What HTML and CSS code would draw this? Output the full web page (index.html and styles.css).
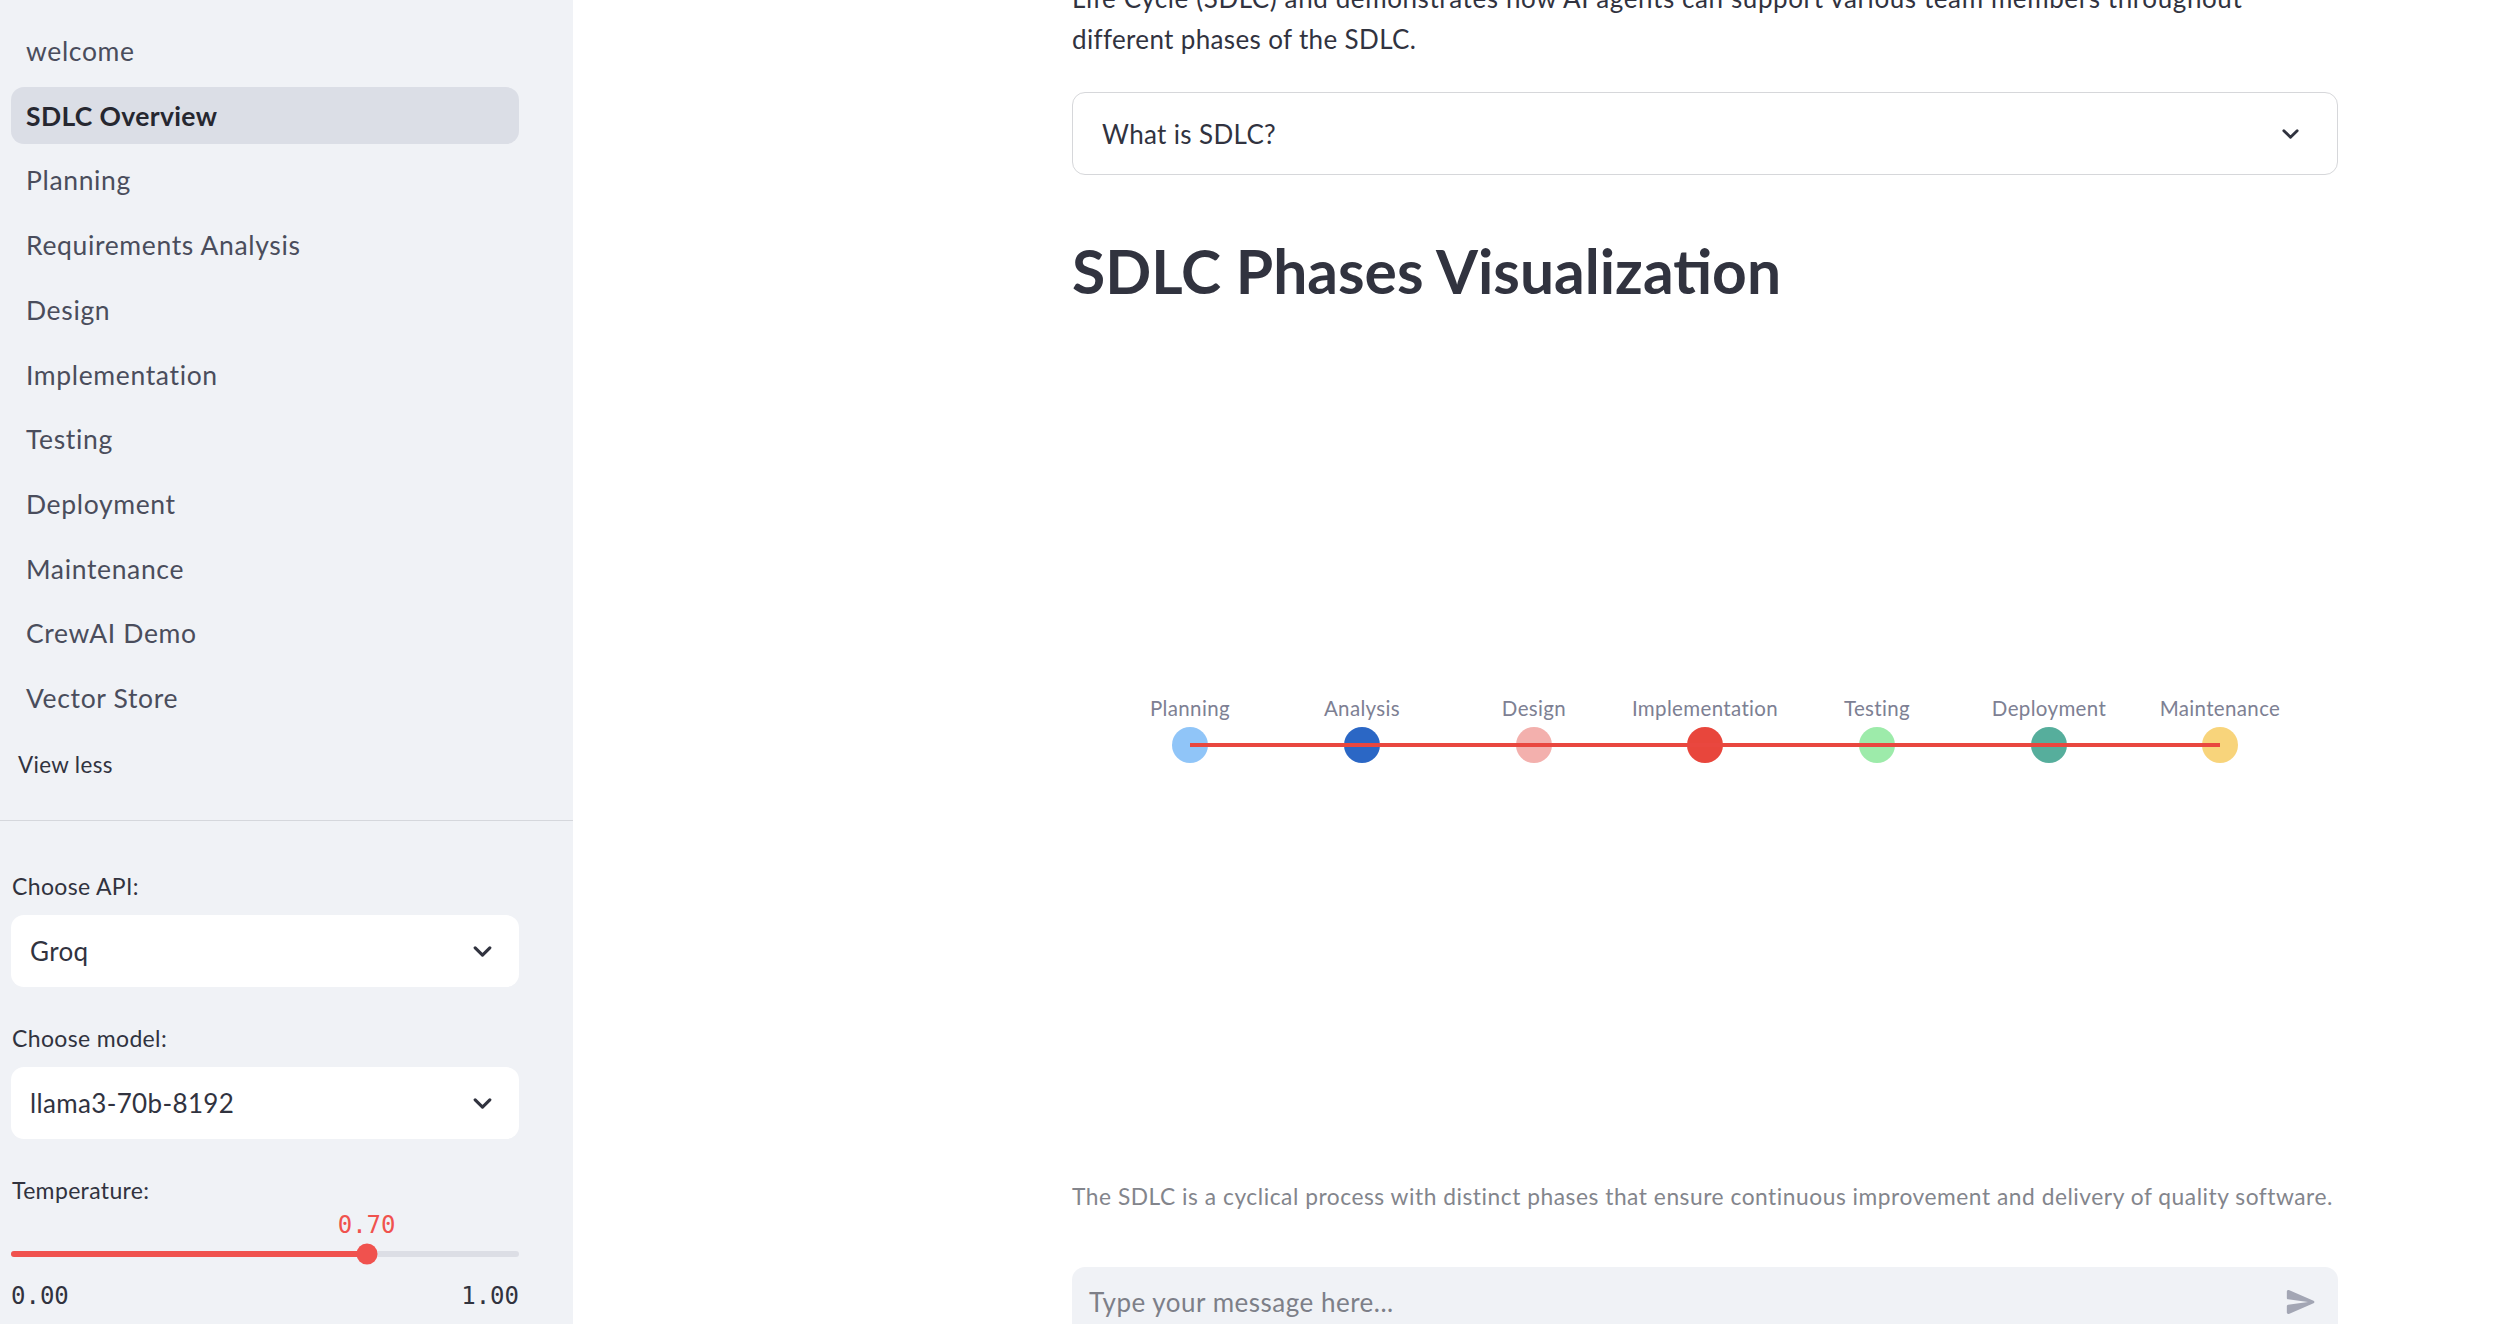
FILE: index.html
```html
<!DOCTYPE html>
<html lang="en">
<head>
<meta charset="utf-8">
<title>SDLC Overview</title>
<link rel="stylesheet" href="styles.css">
</head>
<body>
<div class="app">
  <aside class="sidebar">
    <nav class="nav">
      <ul class="nav-list">
        <li><a class="nav-link">welcome</a></li>
        <li><a class="nav-link active">SDLC Overview</a></li>
        <li><a class="nav-link">Planning</a></li>
        <li><a class="nav-link">Requirements Analysis</a></li>
        <li><a class="nav-link">Design</a></li>
        <li><a class="nav-link">Implementation</a></li>
        <li><a class="nav-link">Testing</a></li>
        <li><a class="nav-link">Deployment</a></li>
        <li><a class="nav-link">Maintenance</a></li>
        <li><a class="nav-link">CrewAI Demo</a></li>
        <li><a class="nav-link">Vector Store</a></li>
      </ul>
      <div class="view-less">View less</div>
    </nav>
    <div class="sidebar-body">
      <div class="widget">
        <div class="widget-label">Choose API:</div>
        <div class="select">
          <span>Groq</span>
          <svg class="chev" viewBox="0 0 20 12" width="19" height="11"><polyline points="2,2 10,10 18,2"/></svg>
        </div>
      </div>
      <div class="widget">
        <div class="widget-label">Choose model:</div>
        <div class="select">
          <span>llama3-70b-8192</span>
          <svg class="chev" viewBox="0 0 20 12" width="19" height="11"><polyline points="2,2 10,10 18,2"/></svg>
        </div>
      </div>
      <div class="widget">
        <div class="widget-label">Temperature:</div>
        <div class="slider">
          <div class="slider-value-row"><span class="slider-value" style="left:70%">0.70</span></div>
          <div class="track-row">
            <div class="track"><div class="fill" style="width:70%"></div><div class="thumb" style="left:70%"></div></div>
          </div>
          <div class="ticks"><span>0.00</span><span>1.00</span></div>
        </div>
      </div>
    </div>
  </aside>
  <main class="main">
    <div class="block">
      <p class="intro"><span class="intro-first">Life Cycle (SDLC) and demonstrates how AI agents can support various team members throughout</span><br>different phases of the SDLC.</p>
      <div class="expander">
        <span>What is SDLC?</span>
        <svg class="exp-chev" viewBox="0 0 20 12" width="17" height="10"><polyline points="2,2 10,10 18,2"/></svg>
      </div>
      <h1 class="title">SDLC Phases Visualization</h1>
      <div class="chart">
        <svg viewBox="0 0 1266 869" width="1266" height="869">
          <g class="chart-labels">
            <text x="118" y="398">Planning</text>
            <text x="290" y="398">Analysis</text>
            <text x="462" y="398">Design</text>
            <text x="633" y="398">Implementation</text>
            <text x="805" y="398">Testing</text>
            <text x="977" y="398">Deployment</text>
            <text x="1148" y="398">Maintenance</text>
          </g>
          <circle cx="118" cy="435" r="18" fill="#90c5f8"/>
          <circle cx="290" cy="435" r="18" fill="#2b67c5"/>
          <circle cx="462" cy="435" r="18" fill="#f3b0ad"/>
          <circle cx="633" cy="435" r="18" fill="#e8463c"/>
          <circle cx="805" cy="435" r="18" fill="#9debaa"/>
          <circle cx="977" cy="435" r="18" fill="#56ae9c"/>
          <circle cx="1148" cy="435" r="18" fill="#f8d47b"/>
          <line x1="118" y1="435" x2="1148" y2="435" stroke="#e9473f" stroke-width="4"/>
        </svg>
      </div>
      <p class="caption">The SDLC is a cyclical process with distinct phases that ensure continuous improvement and delivery of quality software.</p>
      <div class="chat-input">
        <span class="placeholder">Type your message here...</span>
        <svg class="send" viewBox="0 0 24 24" width="34" height="34"><path d="M3.4 20.4l17.45-7.48a1 1 0 0 0 0-1.840L3.4 3.6a.99.99 0 0 0-1.39.91L2 9.12c0 .5.37.93.87.99L17 12 2.87 13.88c-.5.07-.87.5-.87 1l.01 4.61c0 .71.73 1.2 1.39.91z"/></svg>
      </div>
    </div>
  </main>
</div>
</body>
</html>
```

FILE: styles.css
```css
* { box-sizing: border-box; }
html, body { margin: 0; padding: 0; }
body {
  font-family: "Source Sans Pro", Lato, "Noto Sans", sans-serif;
  color: #31333f;
  background: #ffffff;
  overflow: hidden;
  height: 1324px;
  letter-spacing: 0.35px;
}
.app { display: flex; height: 1324px; }

/* Sidebar */
.sidebar {
  width: 573px;
  flex: none;
  background: #f0f2f6;
}
.nav { border-bottom: 1px solid #d5d7dc; padding-bottom: 36px; }
.nav-list {
  list-style: none;
  margin: 0;
  padding: 22.6px 0 0;
  display: flex;
  flex-direction: column;
  gap: 7.7px;
}
.nav-link {
  display: flex;
  align-items: center;
  height: 57px;
  margin: 0 54px 0 11px;
  padding-left: 15px;
  border-radius: 13px;
  font-size: 26.5px;
  letter-spacing: 0.65px;
  color: #4a4d5c;
}
.nav-link.active {
  background: #dbdee6;
  font-weight: 700;
  letter-spacing: 0.35px;
  color: #262730;
}
.view-less {
  margin: 19.6px 0 0 18px;
  line-height: 38px;
  font-size: 22.4px;
  color: #31333f;
}
.sidebar-body { padding: 47.5px 54px 0 11px; }
.widget + .widget { margin-top: 33.5px; }
.widget-label {
  height: 35px;
  line-height: 35px;
  font-size: 23px;
  margin: 0 0 11.5px 1px;
  color: #31333f;
}
.select {
  height: 72px;
  background: #ffffff;
  border-radius: 13px;
  display: flex;
  align-items: center;
  justify-content: space-between;
  padding: 0 27px 0 19px;
  font-size: 26px;
  color: #31333f;
}
.chev polyline, .exp-chev polyline {
  fill: none;
  stroke: #31333f;
  stroke-width: 3.4;
  stroke-linecap: round;
  stroke-linejoin: round;
}
.slider { margin-top: -9px; }
.slider-value-row { position: relative; height: 30px; }
.slider-value {
  position: absolute;
  top: 0;
  transform: translateX(-50%);
  line-height: 30px;
  letter-spacing: 0;
  font-family: "DejaVu Sans Mono", "Liberation Mono", monospace;
  font-size: 24px;
  color: #f0524e;
}
.track-row { height: 28px; display: flex; align-items: center; }
.track {
  position: relative;
  width: 100%;
  height: 6.4px;
  border-radius: 4px;
  background: #dcdee5;
}
.fill { height: 100%; border-radius: 4px; background: #f0524e; }
.thumb {
  position: absolute;
  top: 50%;
  width: 21px;
  height: 21px;
  border-radius: 50%;
  background: #f0524e;
  transform: translate(-50%, -50%);
}
.ticks {
  display: flex;
  justify-content: space-between;
  margin-top: 13px;
  line-height: 30px;
  letter-spacing: 0;
  font-family: "DejaVu Sans Mono", "Liberation Mono", monospace;
  font-size: 24px;
  color: #31333f;
}

/* Main */
.main { flex: 1; min-width: 0; }
.block { width: 1266px; margin: -21.6px 0 0 499px; }
.intro {
  margin: 0 0 31.6px;
  font-size: 26px;
  line-height: 41px;
  white-space: nowrap;
}
.intro-first { letter-spacing: 0.6px; }
.expander {
  height: 83px;
  border: 1px solid #d6d7da;
  border-radius: 13px;
  display: flex;
  align-items: center;
  justify-content: space-between;
  padding: 0 38px 0 29px;
  font-size: 26px;
}
.title {
  margin: 54px 0 0;
  font-size: 60.5px;
  line-height: 84.5px;
  font-weight: 700;
  letter-spacing: 0;
  color: #31333f;
}
.chart { height: 869px; margin-top: -4px; }
.chart svg { display: block; }
.chart-labels text {
  font-family: "Source Sans Pro", Lato, sans-serif;
  font-size: 20.5px;
  fill: #7d8093;
  text-anchor: middle;
  dominant-baseline: central;
}
.caption {
  margin: 0;
  font-size: 22.75px;
  line-height: 36px;
  letter-spacing: 0.53px;
  color: #83858c;
}
.chat-input {
  margin-top: 52px;
  height: 70px;
  background: #f0f2f6;
  border-radius: 13px;
  display: flex;
  align-items: center;
  justify-content: space-between;
  padding: 0 20px 0 17px;
}
.placeholder { font-size: 26px; letter-spacing: 0.5px; color: #7d7f88; }
.send { fill: #a3a6b4; }
```
